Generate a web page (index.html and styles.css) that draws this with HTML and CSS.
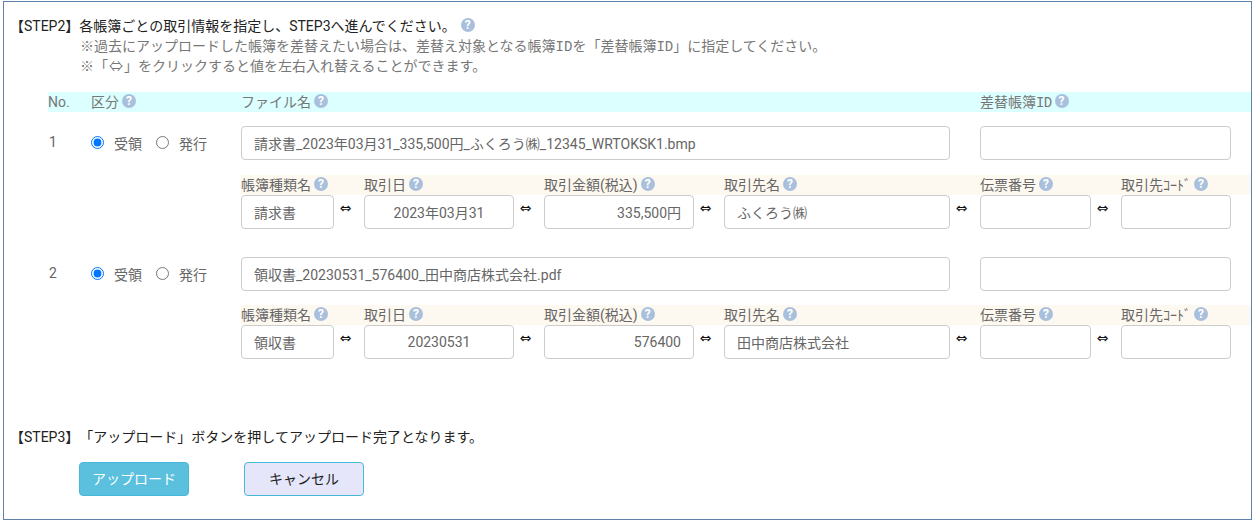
FILE: index.html
```html
<!DOCTYPE html>
<html lang="ja">
<head>
<meta charset="utf-8">
<title>アップロード</title>
<link rel="stylesheet" href="styles.css">
</head>
<body>
<main class="panel">
  <section class="step2">
    <p class="step-title">【STEP2】各帳簿ごとの取引情報を指定し、STEP3へ進んでください。<span class="help help-title">?</span></p>
    <p class="note">※過去にアップロードした帳簿を差替えたい場合は、差替え対象となる帳簿<span class="id">ID</span>を「差替帳簿<span class="id">ID</span>」に指定してください。</p>
    <p class="note">※「<span class="note-arrow">⇔</span>」をクリックすると値を左右入れ替えることができます。</p>
  </section>

  <section class="table">
    <div class="head main-grid">
      <span>No.</span>
      <span>区分<i class="help">?</i></span>
      <span>ファイル名<i class="help">?</i></span>
      <span>差替帳簿<span class="id">ID</span><i class="help">?</i></span>
    </div>

    <div class="record">
      <div class="main-grid file-row">
        <span class="no">1</span>
        <div class="radios">
          <label class="radio"><input type="radio" name="kind1" checked>受領</label>
          <label class="radio"><input type="radio" name="kind1">発行</label>
        </div>
        <input class="field" type="text" value="請求書_2023年03月31_335,500円_ふくろう㈱_12345_WRTOKSK1.bmp">
        <input class="field" type="text" value="">
      </div>
      <div class="sub-grid sub-head">
        <span>帳簿種類名<i class="help">?</i></span><span></span>
        <span>取引日<i class="help">?</i></span><span></span>
        <span>取引金額(税込)<i class="help">?</i></span><span></span>
        <span>取引先名<i class="help">?</i></span><span></span>
        <span>伝票番号<i class="help">?</i></span><span></span>
        <span>取引先ｺｰﾄﾞ<i class="help">?</i></span>
      </div>
      <div class="sub-grid sub-fields">
        <input class="field" type="text" value="請求書"><span class="swap">⇔</span>
        <input class="field center" type="text" value="2023年03月31"><span class="swap">⇔</span>
        <input class="field right" type="text" value="335,500円"><span class="swap">⇔</span>
        <input class="field" type="text" value="ふくろう㈱"><span class="swap">⇔</span>
        <input class="field" type="text" value=""><span class="swap">⇔</span>
        <input class="field" type="text" value="">
      </div>
    </div>

    <div class="record">
      <div class="main-grid file-row">
        <span class="no">2</span>
        <div class="radios">
          <label class="radio"><input type="radio" name="kind2" checked>受領</label>
          <label class="radio"><input type="radio" name="kind2">発行</label>
        </div>
        <input class="field" type="text" value="領収書_20230531_576400_田中商店株式会社.pdf">
        <input class="field" type="text" value="">
      </div>
      <div class="sub-grid sub-head">
        <span>帳簿種類名<i class="help">?</i></span><span></span>
        <span>取引日<i class="help">?</i></span><span></span>
        <span>取引金額(税込)<i class="help">?</i></span><span></span>
        <span>取引先名<i class="help">?</i></span><span></span>
        <span>伝票番号<i class="help">?</i></span><span></span>
        <span>取引先ｺｰﾄﾞ<i class="help">?</i></span>
      </div>
      <div class="sub-grid sub-fields">
        <input class="field" type="text" value="領収書"><span class="swap">⇔</span>
        <input class="field center" type="text" value="20230531"><span class="swap">⇔</span>
        <input class="field right" type="text" value="576400"><span class="swap">⇔</span>
        <input class="field" type="text" value="田中商店株式会社"><span class="swap">⇔</span>
        <input class="field" type="text" value=""><span class="swap">⇔</span>
        <input class="field" type="text" value="">
      </div>
    </div>
  </section>

  <section class="step3">
    <p class="step-title">【STEP3】「アップロード」ボタンを押してアップロード完了となります。</p>
    <div class="actions">
      <button class="btn btn-upload" type="button">アップロード</button>
      <button class="btn btn-cancel" type="button">キャンセル</button>
    </div>
  </section>
</main>
</body>
</html>
```
FILE: styles.css
```css
* { box-sizing: border-box; }
html, body { margin: 0; padding: 0; background: #fff; }
body {
  font-family: Roboto, "Noto Sans CJK JP", sans-serif;
  font-size: 14px;
  line-height: 20px;
  color: #666;
  overflow: hidden;
  text-spacing-trim: space-all;
}
p { margin: 0; }
.panel {
  width: 1249px;
  height: 519px;
  margin: 1px 0 0 3px;
  border: 1px solid #5f82ac;
  padding-top: 14px;
}
.step-title { color: #222; padding-left: 6px; height: 20px; }
.note { padding-left: 76px; color: #777; height: 20px; }
.id {
  font-family: "Liberation Mono", monospace;
  letter-spacing: -0.6px;
}
.note .id { letter-spacing: 0; }
.note-arrow { padding: 0 1px; }
.help {
  display: inline-block;
  width: 14px;
  height: 14px;
  margin: -3px 0 -3px 3px;
  border-radius: 50%;
  background: #a9c0dd;
  color: #fff;
  font: normal 700 12px/14px Roboto, sans-serif;
  text-align: center;
  vertical-align: 2px;
}
.help-title { margin-left: 5px; }
.table { margin: 16px 0 0 44px; }
.main-grid {
  display: grid;
  grid-template-columns: 43px 150px 709px 30px 251px;
}
.main-grid > :nth-child(4) { grid-column: 5; }
.head {
  background: #dcffff;
  height: 20px;
  color: #777;
}
.record { height: 131px; }
.record + .record .file-row { height: 62px; }
.file-row { padding-top: 14px; height: 63px; }
.no { padding-left: 1px; padding-top: 6px; }
.radios { display: flex; gap: 14px; padding-top: 8px; }
.radio { display: flex; align-items: flex-start; }
.radio input { margin: 2px 10px 0 0; width: 13px; height: 13px; }
.field {
  height: 34px;
  width: 100%;
  min-width: 0;
  padding: 0 12px;
  border: 1px solid #ccc;
  border-radius: 4px;
  background: #fff;
  color: #666;
  font: inherit;
  outline: none;
}
.center { text-align: center; }
.right { text-align: right; }
.sub-grid {
  display: grid;
  grid-template-columns: 93px 30px 150px 30px 150px 30px 226px 30px 111px 30px 110px;
  margin-left: 193px;
}
.sub-head {
  height: 20px;
  background: #fef9f0;
}
.sub-fields { height: 34px; }
.swap {
  text-align: center;
  color: #111;
  font: 14px/26px "DejaVu Sans", sans-serif;
  padding-right: 7px;
}
.step3 { margin-top: 53px; }
.actions { display: flex; gap: 55px; margin: 15px 0 0 75px; }
.btn {
  width: 110px;
  height: 34px;
  border: 1px solid #46b8da;
  border-radius: 4px;
  font: inherit;
  padding: 0;
}
.btn-upload { background: #5bc0de; color: #fff; }
.btn-cancel { width: 120px; background: #e6e6fa; color: #222; }
```
